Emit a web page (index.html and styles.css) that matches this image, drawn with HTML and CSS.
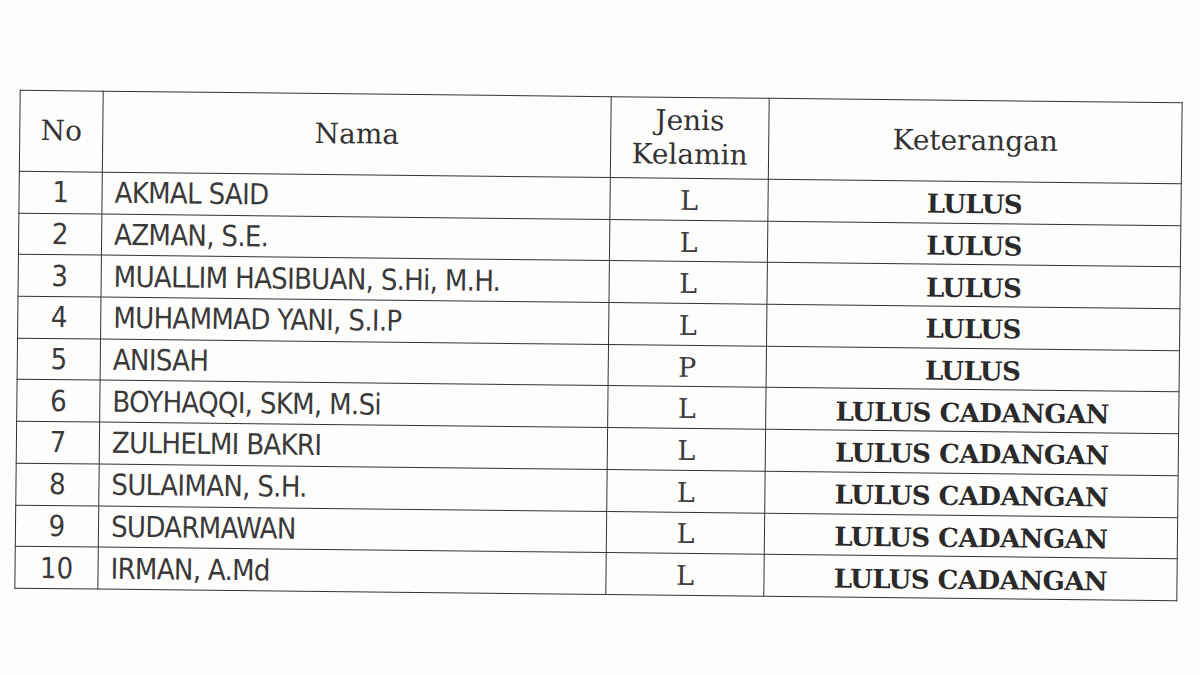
FILE: index.html
```html
<!DOCTYPE html>
<html>
<head>
<meta charset="utf-8">
<link rel="stylesheet" href="styles.css">
</head>
<body>
<div class="page">
  <table class="list">
    <colgroup>
      <col class="c-no"><col class="c-nama"><col class="c-jk"><col class="c-ket">
    </colgroup>
    <thead>
      <tr>
        <th class="h-no">No</th>
        <th>Nama</th>
        <th class="h-jk">Jenis<br>Kelamin</th>
        <th>Keterangan</th>
      </tr>
    </thead>
    <tbody>
      <tr><td class="no">1</td><td class="nama">AKMAL SAID</td><td class="jk">L</td><td class="ket">LULUS</td></tr>
      <tr><td class="no">2</td><td class="nama">AZMAN, S.E.</td><td class="jk">L</td><td class="ket">LULUS</td></tr>
      <tr><td class="no">3</td><td class="nama">MUALLIM HASIBUAN, S.Hi, M.H.</td><td class="jk">L</td><td class="ket">LULUS</td></tr>
      <tr><td class="no">4</td><td class="nama">MUHAMMAD YANI, S.I.P</td><td class="jk">L</td><td class="ket">LULUS</td></tr>
      <tr><td class="no">5</td><td class="nama">ANISAH</td><td class="jk">P</td><td class="ket">LULUS</td></tr>
      <tr><td class="no">6</td><td class="nama">BOYHAQQI, SKM, M.Si</td><td class="jk">L</td><td class="ket">LULUS CADANGAN</td></tr>
      <tr><td class="no">7</td><td class="nama">ZULHELMI BAKRI</td><td class="jk">L</td><td class="ket">LULUS CADANGAN</td></tr>
      <tr><td class="no">8</td><td class="nama">SULAIMAN, S.H.</td><td class="jk">L</td><td class="ket">LULUS CADANGAN</td></tr>
      <tr><td class="no">9</td><td class="nama">SUDARMAWAN</td><td class="jk">L</td><td class="ket">LULUS CADANGAN</td></tr>
      <tr><td class="no">10</td><td class="nama">IRMAN, A.Md</td><td class="jk">L</td><td class="ket">LULUS CADANGAN</td></tr>
    </tbody>
  </table>
</div>
</body>
</html>
```
FILE: styles.css
```css
html, body {
  margin: 0;
  padding: 0;
  background: #fdfdfc;
}
.page {
  width: 1200px;
  height: 675px;
  padding: 96px 0 0 17px;
  box-sizing: border-box;
  overflow: hidden;
}
.list {
  border-collapse: collapse;
  width: 1162px;
  table-layout: fixed;
  color: #2e2e2e;
  transform: rotate(0.62deg);
  transform-origin: 50% 50%;
}
.c-no { width: 83px; }
.c-nama { width: 508px; }
.c-jk { width: 158px; }
.c-ket { width: 413px; }
.list th, .list td {
  border: 1.8px solid #333;
  padding: 0;
}
.list th {
  height: 80px;
  font-family: "DejaVu Serif", serif;
  font-weight: normal;
  font-size: 28px;
  line-height: 34px;
  text-align: center;
  vertical-align: middle;
  color: #333;
}
.list td {
  height: 36.7px;
  line-height: 34px;
  vertical-align: middle;
}
.no {
  font-family: "DejaVu Sans Condensed", "DejaVu Sans", sans-serif;
  font-size: 29px;
  text-align: center;
  color: #3a3a3a;
}
.nama {
  font-family: "DejaVu Sans Condensed", "DejaVu Sans", sans-serif;
  font-size: 29px;
  padding-left: 12px !important;
  color: #3a3a3a;
  letter-spacing: -0.7px;
}
.jk {
  font-family: "DejaVu Serif", serif;
  font-size: 27px;
  text-align: center;
  color: #3a3a3a;
  padding-top: 3px !important;
}
.ket {
  font-family: "DejaVu Serif", serif;
  font-weight: bold;
  font-size: 26px;
  letter-spacing: -0.5px;
  text-align: center;
  color: #2a2a2a;
  padding-top: 4px !important;
}
```
